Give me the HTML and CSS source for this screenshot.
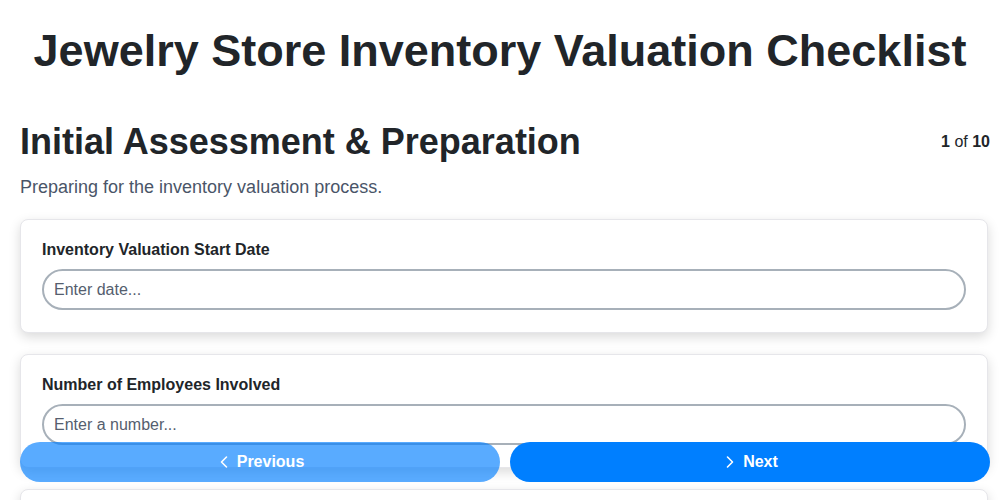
FILE: index.html
```html
<!DOCTYPE html>
<html lang="en">
<head>
  <meta charset="UTF-8" />
  <meta name="viewport" content="width=device-width, initial-scale=1.0"/>
  <title>Jewelry Store Inventory Valuation Checklist</title>
  <link rel="stylesheet" href="styles.css">
</head>
<body>

  <h1 class="page-title">Jewelry Store Inventory Valuation Checklist</h1>

  <div class="step">
    <div class="step-header">
      <h2>Initial Assessment &amp; Preparation</h2>
      <div class="step-count"><b>1</b> of <b>10</b></div>
    </div>
    <p class="step-desc">Preparing for the inventory valuation process.</p>

    <div class="field-card">
      <label for="startDate">Inventory Valuation Start Date</label>
      <input type="text" id="startDate" placeholder="Enter date...">
    </div>

    <div class="field-card">
      <label for="employees">Number of Employees Involved</label>
      <input type="text" id="employees" placeholder="Enter a number...">
    </div>

    <div class="field-card">
      <label for="categories">Inventory Categories to Be Valued</label>
      <input type="text" id="categories" placeholder="Enter text...">
    </div>

    <div class="field-card">
      <label for="method">Valuation Method</label>
      <input type="text" id="method" placeholder="Enter text...">
    </div>
  </div>

  <div class="nav-bar">
    <button class="nav-btn" disabled>
      <svg width="16" height="16" viewBox="0 0 16 16" fill="none" stroke="currentColor" stroke-width="1.6" stroke-linecap="round" stroke-linejoin="round"><path d="M10.5 3 5.5 8l5 5"/></svg>
      Previous
    </button>
    <button class="nav-btn">
      <svg width="16" height="16" viewBox="0 0 16 16" fill="none" stroke="currentColor" stroke-width="1.6" stroke-linecap="round" stroke-linejoin="round"><path d="M5.5 3l5 5-5 5"/></svg>
      Next
    </button>
  </div>

</body>
</html>
```

FILE: styles.css
```css
body {
  margin: 0;
  padding: 0;
  font-family: "Liberation Sans", Arial, sans-serif;
  background-color: #fff;
  color: #212529;
}

.page-title {
  margin: 0;
  padding: 25px 0 43px;
  text-align: center;
  font-size: 45px;
  line-height: 52px;
  font-weight: bold;
}

.step {
  padding: 0 10px 80px 20px;
}

.step-header {
  display: flex;
  justify-content: space-between;
  align-items: center;
}

.step-header h2 {
  margin: 0;
  font-size: 36px;
  line-height: 44px;
  font-weight: bold;
}

.step-count {
  font-size: 16px;
}

.step-desc {
  margin: 13px 0 21px;
  font-size: 18px;
  color: #4a5568;
}

.field-card {
  margin: 0 2px 21px 0;
  padding: 21px 21px 22px;
  border: 1px solid #e6e6ea;
  border-radius: 8px;
  background: #fff;
  box-shadow: 0 4px 12px rgba(0, 0, 0, 0.15);
}

.field-card label {
  display: block;
  margin-bottom: 10px;
  font-size: 16px;
  font-weight: bold;
  color: #212529;
}

.field-card input {
  display: block;
  width: 100%;
  box-sizing: border-box;
  height: 41px;
  padding: 0 10px;
  border: 2px solid #a7b0b9;
  border-radius: 21px;
  font-family: inherit;
  font-size: 16px;
  color: #212529;
  background: #fff;
}

.field-card input::placeholder {
  color: #555e6e;
}

.nav-bar {
  position: fixed;
  left: 20px;
  right: 10px;
  bottom: 18px;
  display: flex;
  gap: 10px;
}

.nav-btn {
  flex: 1;
  height: 40px;
  display: flex;
  align-items: center;
  justify-content: center;
  gap: 5px;
  border: none;
  border-radius: 20px;
  background-color: #007fff;
  color: #fff;
  font-family: inherit;
  font-size: 16px;
  font-weight: bold;
}

.nav-btn:disabled {
  opacity: 0.65;
}
```
